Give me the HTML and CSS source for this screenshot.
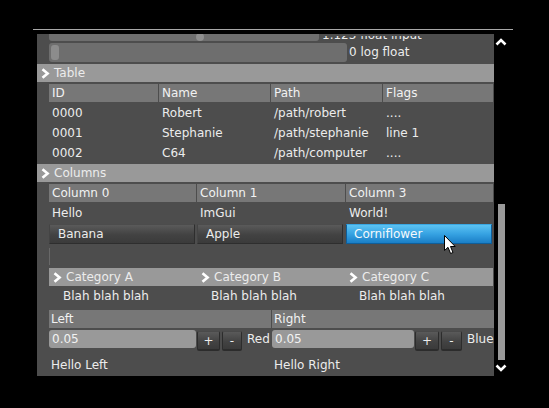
FILE: index.html
```html
<!DOCTYPE html>
<html>
<head>
<meta charset="utf-8">
<link rel="stylesheet" href="styles.css">
</head>
<body>
<div class="topline"></div>
<div class="frame">
  <div class="panel">
    <div class="clip-row">
      <div class="slider-row slider-row--clipped">
        <div class="slider slider--a"><span class="knob-round"></span></div>
        <span class="slider-label slider-label--clipped"><span>1.123 float input</span></span>
      </div>
    </div>
    <div class="slider-row">
      <div class="slider slider--b"><span class="knob-bar"></span></div>
      <span class="slider-label">0 log float</span>
    </div>

    <div class="header">
      <svg class="chev" width="9" height="11" viewBox="0 0 9 11"><polyline points="1.5,1.2 6.6,5.5 1.5,9.8"/></svg>
      <span>Table</span>
    </div>
    <div class="table">
      <div class="th">ID</div><div class="th">Name</div><div class="th">Path</div><div class="th">Flags</div>
      <div class="td">0000</div><div class="td">Robert</div><div class="td">/path/robert</div><div class="td">....</div>
      <div class="td">0001</div><div class="td">Stephanie</div><div class="td">/path/stephanie</div><div class="td">line 1</div>
      <div class="td">0002</div><div class="td">C64</div><div class="td">/path/computer</div><div class="td">....</div>
    </div>

    <div class="header header--columns">
      <svg class="chev" width="9" height="11" viewBox="0 0 9 11"><polyline points="1.5,1.2 6.6,5.5 1.5,9.8"/></svg>
      <span>Columns</span>
    </div>
    <div class="cols">
      <div class="th">Column 0</div><div class="th">Column 1</div><div class="th">Column 3</div>
      <div class="td">Hello</div><div class="td">ImGui</div><div class="td">World!</div>
      <div class="bcell"><div class="btn">Banana</div></div>
      <div class="bcell"><div class="btn">Apple</div></div>
      <div class="bcell"><div class="btn btn--blue">Corniflower</div></div>
    </div>
    <div class="empty-row"><span class="vline"></span></div>
    <div class="cats">
      <div class="cat"><svg class="chev" width="9" height="11" viewBox="0 0 9 11"><polyline points="1.5,1.2 6.6,5.5 1.5,9.8"/></svg><span>Category A</span></div>
      <div class="cat"><svg class="chev" width="9" height="11" viewBox="0 0 9 11"><polyline points="1.5,1.2 6.6,5.5 1.5,9.8"/></svg><span>Category B</span></div>
      <div class="cat"><svg class="chev" width="9" height="11" viewBox="0 0 9 11"><polyline points="1.5,1.2 6.6,5.5 1.5,9.8"/></svg><span>Category C</span></div>
    </div>
    <div class="blahs">
      <div class="blah">Blah blah blah</div>
      <div class="blah">Blah blah blah</div>
      <div class="blah">Blah blah blah</div>
    </div>

    <div class="split">
      <div class="th th--lr">Left</div><div class="th th--lr">Right</div>
    </div>
    <div class="split split--inputs">
      <div class="inrow">
        <div class="input input--left">0.05</div>
        <div class="sbtn sbtn--plus">+</div>
        <div class="sbtn sbtn--minus">-</div>
        <span class="inlabel">Red</span>
      </div>
      <div class="inrow">
        <div class="input input--right">0.05</div>
        <div class="sbtn sbtn--plus2">+</div>
        <div class="sbtn sbtn--minus2">-</div>
        <span class="inlabel">Blue</span>
      </div>
    </div>
    <div class="split split--hello">
      <div class="hello">Hello Left</div>
      <div class="hello">Hello Right</div>
    </div>
  </div>

  <div class="scrollbar">
    <svg class="arrow" width="12" height="8" viewBox="0 0 12 8"><polyline points="1.5,6.5 6,2 10.5,6.5"/></svg>
    <div class="thumb"></div>
    <svg class="arrow arrow--down" width="12" height="8" viewBox="0 0 12 8"><polyline points="1.5,1.5 6,6 10.5,1.5"/></svg>
  </div>
</div>

<svg class="cursor" width="13" height="20" viewBox="0 0 13 20">
  <path d="M0.5 0.5 L0.5 15.5 L4 12.3 L6.6 18.5 L9 17.5 L6.5 11.5 L11.2 11.5 Z"/>
</svg>
</body>
</html>
```

FILE: styles.css
```css
* { box-sizing: border-box; }

html, body {
  margin: 0;
  padding: 0;
}

body {
  width: 549px;
  height: 408px;
  overflow: hidden;
  background: #000;
  font-family: "DejaVu Sans", "Liberation Sans", sans-serif;
  font-size: 12px;
  color: #ececec;
  position: relative;
  padding-top: 29px;
}

.topline {
  margin-left: 33px;
  width: 480px;
  height: 1px;
  background: #a8a8a8;
}

.frame {
  display: flex;
  margin-top: 4px;
  margin-left: 37px;
}

.panel {
  width: 457px;
  height: 342px;
  background: #4d4d4d;
  overflow: hidden;
}

/* sliders */
.clip-row {
  height: 7px;
  overflow: hidden;
}

.slider-row {
  display: flex;
  align-items: center;
  height: 19px;
  padding-left: 12px;
  margin-top: 2px;
}

.slider-row--clipped {
  margin-top: -12px;
}

.slider {
  height: 19px;
  background: #6e6e6e;
  border-radius: 3px;
  display: flex;
}

.slider--a {
  width: 270px;
  align-items: flex-end;
  padding-left: 147px;
}

.knob-round {
  width: 8px;
  height: 8px;
  border-radius: 50%;
  background: #8e8e8e;
}

.slider--b {
  width: 298px;
  align-items: center;
  padding-left: 2px;
}

.knob-bar {
  width: 8px;
  height: 15px;
  border-radius: 3px;
  background: #8c8c8c;
}

.slider-label {
  margin-left: 2px;
  line-height: 19px;
}

.slider-label--clipped {
  align-self: flex-end;
  height: 5px;
  overflow: hidden;
  display: flex;
  align-items: flex-end;
  margin-left: 3px;
  line-height: 12px;
}

.slider-label--clipped span {
  white-space: nowrap;
}

/* collapsing headers */
.header {
  display: flex;
  align-items: center;
  height: 18px;
  margin-top: 2px;
  background: #999;
  padding-left: 4px;
}

.header--columns {
  margin-top: 1px;
}

.header span {
  margin-left: 4px;
}

.chev {
  display: block;
  flex: none;
}

.chev polyline {
  fill: none;
  stroke: #fff;
  stroke-width: 2.6;
}

/* table */
.table {
  display: grid;
  grid-template-columns: 109px 111px 111px 110px;
  column-gap: 1px;
  margin-left: 12px;
  margin-top: 2px;
}

.th {
  height: 18px;
  line-height: 18px;
  background: #777;
  padding-left: 3px;
  margin-bottom: 1px;
  color: #f2f2f2;
}

.td {
  height: 20px;
  line-height: 20px;
  padding-left: 3px;
}

/* columns */
.cols {
  display: grid;
  grid-template-columns: 147px 148px 147px;
  column-gap: 1px;
  margin-left: 12px;
  margin-top: 2px;
}

.bcell {
  margin-top: 1px;
  height: 20px;
}

.btn {
  width: 146px;
  height: 20px;
  line-height: 19px;
  padding-left: 8px;
  background: linear-gradient(#5a5a5a, #424242 55%, #3b3b3b);
  border: 1px solid #2e2e2e;
  border-top-color: #4c4c4c;
  border-left-color: #444;
}

.btn--blue {
  background: linear-gradient(#5cc3f2, #36a2e2 50%, #1a7ec6);
  border-color: #0f5e99;
  border-top-color: #3aa7e2;
  color: #f4f8fb;
  padding-left: 7px;
}

.empty-row {
  height: 24px;
  padding: 4px 0 3px 12px;
  display: flex;
}

.vline {
  width: 1px;
  height: 17px;
  background: #686868;
}

.cats {
  display: grid;
  grid-template-columns: 148px 148px 148px;
  margin-left: 12px;
  width: 444px;
  height: 18px;
  background: #999;
}

.cat {
  display: flex;
  align-items: center;
  padding-left: 4px;
}

.cat span {
  margin-left: 4px;
}

.blahs {
  display: grid;
  grid-template-columns: 148px 148px 148px;
  margin-left: 12px;
}

.blah {
  height: 20px;
  line-height: 20px;
  padding-left: 14px;
}

/* left / right */
.split {
  display: grid;
  grid-template-columns: 222px 222px;
  column-gap: 1px;
  margin-left: 12px;
  margin-top: 4px;
}

.th--lr {
  padding-left: 2px;
  margin-bottom: 0;
}

.split--inputs {
  margin-top: 2px;
}

.inrow {
  display: flex;
  align-items: flex-start;
  height: 20px;
}

.input {
  height: 18px;
  line-height: 18px;
  background: #999;
  border-radius: 3px;
  padding-left: 3px;
  color: #f2f2f2;
}

.input--left { width: 147px; }
.input--right { width: 142px; }

.sbtn {
  height: 20px;
  margin-top: 1px;
  line-height: 19px;
  text-align: center;
  background: linear-gradient(#5a5a5a, #434343 55%, #3a3a3a);
  border: 1px solid #2c2c2c;
  border-top-color: #4a4a4a;
  border-bottom-width: 2px;
  border-radius: 2px;
}

.sbtn--plus { margin-left: 1px; width: 23px; }
.sbtn--minus { margin-left: 2px; width: 20px; }
.sbtn--plus2 { margin-left: 1px; width: 24px; }
.sbtn--minus2 { margin-left: 2px; width: 21px; }

.inlabel {
  margin-left: 5px;
  line-height: 18px;
}

.split--hello {
  margin-top: 5px;
}

.hello {
  height: 20px;
  line-height: 20px;
  padding-left: 2px;
}

/* scrollbar */
.scrollbar {
  width: 15px;
  height: 342px;
  display: flex;
  flex-direction: column;
  padding-top: 4px;
}

.arrow {
  margin-left: 1px;
  display: block;
}

.arrow polyline {
  fill: none;
  stroke: #fff;
  stroke-width: 2.6;
}

.thumb {
  margin-top: 158px;
  margin-left: 4px;
  width: 7px;
  height: 156px;
  background: #9a9a9a;
}

.arrow--down {
  margin-top: 4px;
}

.cursor {
  position: absolute;
  left: 444px;
  top: 235px;
}

.cursor path {
  fill: #fff;
  stroke: #000;
  stroke-width: 1;
  stroke-linejoin: miter;
}
```
